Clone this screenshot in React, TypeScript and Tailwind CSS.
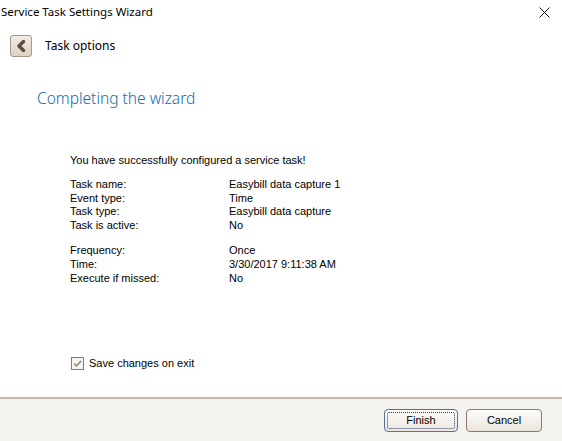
import React from 'react'

const summary = [
  [
    ['Task name:', 'Easybill data capture 1'],
    ['Event type:', 'Time'],
    ['Task type:', 'Easybill data capture'],
    ['Task is active:', 'No'],
  ],
  [
    ['Frequency:', 'Once'],
    ['Time:', '3/30/2017 9:11:38 AM'],
    ['Execute if missed:', 'No'],
  ],
]

export default function App() {
  return (
    <div className="w-[562px] h-[441px] bg-white flex flex-col text-[11px] text-[#000] font-['Liberation_Sans',Arial,sans-serif] overflow-hidden">
      {/* title bar */}
      <div className="h-[24px] flex items-center justify-between pl-[1px] pr-[12px] shrink-0">
        <span className="text-[11.5px] font-['Noto_Sans',sans-serif] leading-none">Service Task Settings Wizard</span>
        <svg width="11" height="11" viewBox="0 0 11 11">
          <path d="M0.5 0.5L10.5 10.5M10.5 0.5L0.5 10.5" stroke="#111" strokeWidth="1" />
        </svg>
      </div>

      {/* page header with back button */}
      <div className="flex items-center h-[24px] mt-[10px] pl-[10px] gap-[13px] shrink-0">
        <button className="w-[22px] h-[22px] rounded-[3px] border border-[#a99884] bg-gradient-to-b from-[#f3ede6] to-[#dcd0c2] flex items-center justify-center">
          <svg width="10" height="12" viewBox="0 0 10 12">
            <path d="M7.5 1.5L3 6l4.5 4.5" fill="none" stroke="#5e4c3b" strokeWidth="3.4" strokeLinecap="round" strokeLinejoin="round" />
          </svg>
        </button>
        <span className="text-[12px] font-['Noto_Sans',sans-serif]">Task options</span>
      </div>

      <div className="pl-[37px] mt-[30px] text-[15.5px] leading-[20px] text-[#0f6cb3] font-['Noto_Sans',sans-serif] font-light shrink-0">
        Completing the wizard
      </div>

      <div className="flex-1 pl-[70px] pt-[45px]">
        <div className="leading-[14px]">You have successfully configured a service task!</div>
        <div className="mt-[11px] flex flex-col gap-[12px]">
          {summary.map((group, gi) => (
            <div key={gi}>
              {group.map(([label, value]) => (
                <div key={label} className="grid grid-cols-[159px_1fr] leading-[13.6px]">
                  <span>{label}</span>
                  <span>{value}</span>
                </div>
              ))}
            </div>
          ))}
        </div>

        <label className="flex items-center gap-[5px] mt-[70px] ml-[1px]">
          <span className="w-[13px] h-[13px] border border-[#8c7b6b] bg-[#f7f5f2] flex items-center justify-center">
            <svg width="9" height="7" viewBox="0 0 9 7">
              <path d="M1 3.5l2.5 2.5L8 1" fill="none" stroke="#8c7b6b" strokeWidth="1.3" />
            </svg>
          </span>
          <span>Save changes on exit</span>
        </label>
      </div>

      {/* footer */}
      <div className="h-[44px] shrink-0 border-t-2 border-[#c6b8a8] bg-[#f5f3ef] flex items-center justify-end gap-[8px] pr-[20px]">
        <button className="w-[74px] h-[23px] rounded-[4px] border border-[#5a6f99] bg-gradient-to-b from-[#fdfcfb] to-[#ece6de] flex items-center justify-center p-[2px]">
          <span className="w-full h-full border border-dotted border-[#1e3a8a] rounded-[2px] flex items-center justify-center">Finish</span>
        </button>
        <button className="w-[76px] h-[23px] rounded-[4px] border border-[#8c7b6b] bg-gradient-to-b from-[#fdfcfb] to-[#ece6de]">Cancel</button>
      </div>
    </div>
  )
}
